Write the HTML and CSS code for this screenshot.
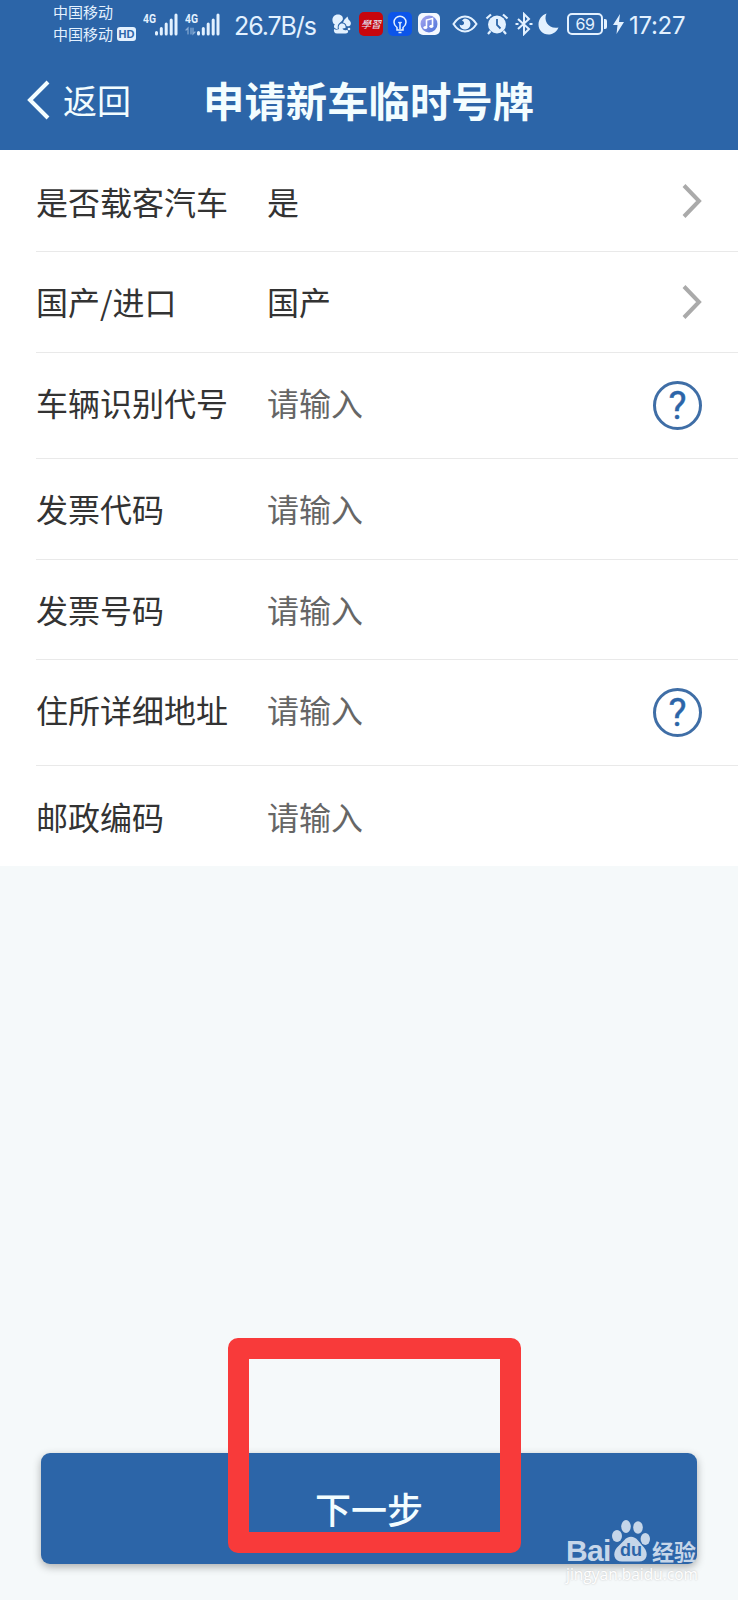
FILE: index.html
```html
<!DOCTYPE html>
<html lang="zh-CN">
<head>
    <meta charset="UTF-8">
    <meta name="viewport" content="width=device-width, initial-scale=1.0">
    <title>申请新车临时号牌</title>
    <link rel="stylesheet" href="styles.css">
</head>
<body>
    <header>
        <div class="status">
            <div class="carriers">
                <div>中国移动</div>
                <div>中国移动<span class="hd">HD</span></div>
            </div>
            <svg class="signal" width="36" height="24" viewBox="0 0 36 24">
                <text x="0" y="11" textLength="13" lengthAdjust="spacingAndGlyphs">4G</text>
                <path d="M13.500 20.500v1.500M18.300 16.500v5.500M23.200 12v10M28.200 8v14M33 3v19"/>
            </svg>
            <svg class="signal" width="36" height="24" viewBox="0 0 36 24">
                <text x="0" y="11" textLength="13" lengthAdjust="spacingAndGlyphs">4G</text>
                <path d="M13.500 20.500v1.500M18.300 16.500v5.500M23.200 12v10M28.200 8v14M33 3v19"/>
                <path class="faint" d="M1 18l2-2v6M6 16v6M8 16v6l2-2"/>
            </svg>
            <span class="speed">26.7B/s</span>
            <svg class="squirrel" width="20" height="22" viewBox="0 0 20 22">
                <path d="M.5 8C0 4 2.500 1.500 6 1.500c3.500 0 5.500 2.500 4.800 5C10 9 7 9.500 6 12c-.5 1.500 0 3-.5 4.500L2.500 15C1.500 13.500 2 12 3 11.500 1.500 11 .7 9.500.5 8z"/>
                <path d="M12.500 6.500l3-3 1 3c2 1.500 3 3.500 2 5.500-.8 1.300-2.500 1.500-4 1-.3-2-1.500-3-3.500-3.500z"/>
                <path d="M2 16c1.500 1 3.500 1 5 0-1-3 .5-5.500 3-5.500s4 2 3.500 4.500l-3 .5c.5 1.500 2 2 4 1.500l1.500.5c.5 2-.5 3-2.500 3H5c-2.500 0-3.500-2-3-4.500z"/>
                <circle cx="17" cy="16" r="1.300"/>
            </svg>
            <span class="app red">學習</span>
            <svg class="app blue" width="24" height="24" viewBox="0 0 24 24">
                <path d="M9 15.500C7 14 6 12.500 6 10.300a6 6 0 0 1 12 0c0 2.200-1 3.700-3 5.200V18H9zM10.500 20.500h3M12 17v-6M10.500 10l1.500 1.500 1.500-1.500"/>
            </svg>
            <svg class="music" width="22" height="22" viewBox="0 0 22 22">
                <defs>
                    <linearGradient id="note" x1="0" y1="0" x2="1" y2="1">
                        <stop offset="0" stop-color="#a9a6f0"/>
                        <stop offset="1" stop-color="#4a72d8"/>
                    </linearGradient>
                </defs>
                <rect width="22" height="22" rx="5" fill="#f4f8ff"/>
                <circle cx="11" cy="11" r="8.500" fill="url(#note)"/>
                <path d="M8.500 14.500V7l6-1.500v7.500" fill="none" stroke="#fff" stroke-width="1.600"/>
                <ellipse cx="7.300" cy="14.500" rx="2" ry="1.600" fill="#fff"/>
                <ellipse cx="13.300" cy="13.300" rx="2" ry="1.600" fill="#fff"/>
            </svg>
            <svg class="eye" width="26" height="18" viewBox="0 0 26 18">
                <path d="M1.500 9C5 3.500 9 1.500 13 1.500S21 3.500 24.500 9C21 14.500 17 16.500 13 16.500S5 14.500 1.500 9z" fill="none" stroke="#e3f1ff" stroke-width="2"/>
                <path d="M13 3.500a5.500 5.500 0 1 1-5.500 6c2 1.500 5 .5 4.500-2-.2-1-1-1.500-2-1.500.8-1.500 1.800-2.500 3-2.500z"/>
            </svg>
            <svg class="alarm" width="24" height="22" viewBox="0 0 24 22">
                <circle cx="12" cy="11.500" r="9"/>
                <path d="M1.500 5.500l4.500-4M18 1.500l4.500 4M5.500 18l-2.500 3M18.500 18l2.500 3" stroke="#e3f1ff" stroke-width="2.200"/>
                <path d="M12 6v6l3.500 3.500" fill="none" stroke="#2c65a8" stroke-width="1.800"/>
            </svg>
            <svg class="bt" width="18" height="24" viewBox="0 0 18 24">
                <path d="M3 7l11 10-5 5V2l5 5L3 17M.5 12h3M14.500 12h3"/>
            </svg>
            <svg class="moon" width="21" height="22" viewBox="0 0 21 22">
                <path d="M8.500.5C5 8 11 16.500 20.500 14.500 18 20 13.500 21.500 10.500 21.500 4.500 21.500.5 17 .5 11.500.5 6 4 2 8.500.5z"/>
            </svg>
            <span class="battery">69</span>
            <svg class="bolt" width="11" height="20" viewBox="0 0 11 20">
                <path d="M7 0L0 11h4.500L3.500 20 11 8H6z"/>
            </svg>
            <span class="clock">17:27</span>
        </div>
        <nav>
            <svg width="24" height="40" viewBox="0 0 24 40">
                <path d="M21 2L3 20l18 18"/>
            </svg>
            <span class="back">返回</span>
            <h1>申请新车临时号牌</h1>
        </nav>
    </header>

    <main>
        <div class="row">
            <label>是否载客汽车</label>
            <span class="value">是</span>
            <svg class="arrow" width="20" height="36" viewBox="0 0 20 36"><path d="M2 2.500L17 18 2 33.500"/></svg>
        </div>
        <div class="row">
            <label>国产/进口</label>
            <span class="value">国产</span>
            <svg class="arrow" width="20" height="36" viewBox="0 0 20 36"><path d="M2 2.500L17 18 2 33.500"/></svg>
        </div>
        <div class="row tall">
            <label>车辆识别代号</label>
            <span class="value empty">请输入</span>
            <span class="help">?</span>
        </div>
        <div class="row">
            <label>发票代码</label>
            <span class="value empty">请输入</span>
        </div>
        <div class="row">
            <label>发票号码</label>
            <span class="value empty">请输入</span>
        </div>
        <div class="row tall">
            <label>住所详细地址</label>
            <span class="value empty">请输入</span>
            <span class="help">?</span>
        </div>
        <div class="row">
            <label>邮政编码</label>
            <span class="value empty">请输入</span>
        </div>
    </main>

    <footer>
        <button type="button">下一步</button>
        <div class="mark"></div>
        <div class="watermark">
            <div class="logo">
                <span class="bai">Bai</span>
                <span class="paw">
                    <svg width="38" height="42" viewBox="0 0 38 42">
                        <ellipse cx="5" cy="16" rx="5" ry="6"/>
                        <ellipse cx="14" cy="6.500" rx="4.800" ry="6.500"/>
                        <ellipse cx="26" cy="7.500" rx="4.800" ry="6.200"/>
                        <ellipse cx="33.300" cy="19" rx="4.700" ry="6"/>
                        <path d="M12 20.500c4-5 10-5 14 0l6 7c5 6 3 14-5 14H10c-8 0-10-8-5-14z"/>
                    </svg>
                    <b>du</b>
                </span>
                <span class="jy">经验</span>
            </div>
            <div class="url">jingyan.baidu.com</div>
        </div>
    </footer>
</body>
</html>
```

FILE: styles.css
```css
* {
    box-sizing: border-box;
}
body {
    margin: 0;
    height: 1600px;
    display: flex;
    flex-direction: column;
    font-family: "Noto Sans CJK SC", sans-serif;
    background-color: #f5f9fa;
    color: #333;
    overflow: hidden;
}
header {
    height: 150px;
    background-color: #2c65a8;
    color: #f3fdff;
}

/* status bar */
.status {
    height: 48px;
    padding-left: 53px;
    display: flex;
    align-items: center;
    color: #e3f1ff;
    white-space: nowrap;
}
.status svg {
    flex: none;
    fill: #e3f1ff;
}
.carriers {
    width: 84px;
    margin-top: -3px;
    font-size: 15px;
    line-height: 21.5px;
}
.carriers div {
    display: flex;
    align-items: center;
}
.hd {
    width: 19px;
    height: 14px;
    margin: 2px 0 0 4px;
    border-radius: 3px;
    background-color: #e3f1ff;
    color: #2c65a8;
    font: bold 11px/14px "Liberation Sans", sans-serif;
    text-align: center;
}
.signal {
    margin-left: 6px;
}
.signal text {
    font: bold 12px Roboto, sans-serif;
}
.signal path {
    fill: none;
    stroke: #e3f1ff;
    stroke-width: 3;
    stroke-linecap: round;
}
.signal .faint {
    stroke-width: 1.2;
    opacity: 0.5;
}
.speed {
    width: 82px;
    margin-left: 13px;
    padding-top: 3px;
    font: 25px Inter, sans-serif;
    letter-spacing: -1.1px;
}
.squirrel {
    margin-left: 16px;
}
.app {
    width: 24px;
    height: 24px;
    border-radius: 5px;
}
.red {
    margin-left: 7px;
    background-color: #c8060c;
    font: italic 10px/24px "Noto Sans CJK SC", sans-serif;
    text-align: center;
}
.status .blue {
    margin-left: 5px;
    background-color: #0c55ea;
    fill: none;
    stroke: #e3f1ff;
    stroke-width: 1.5;
}
.music {
    margin-left: 6px;
}
.eye {
    margin-left: 12px;
}
.alarm {
    margin-left: 7px;
}
.status .bt {
    margin-left: 6px;
    fill: none;
    stroke: #e3f1ff;
    stroke-width: 2;
}
.moon {
    margin-left: 5px;
}
.battery {
    position: relative;
    width: 36px;
    height: 22px;
    margin-left: 8px;
    border: 2px solid #e3f1ff;
    border-radius: 5px;
    font: 16px/18px Inter, sans-serif;
    letter-spacing: -0.5px;
    text-align: center;
}
.battery::after {
    content: "";
    position: absolute;
    right: -6px;
    top: 4px;
    width: 3px;
    height: 10px;
    border-radius: 0 2px 2px 0;
    background-color: #e3f1ff;
}
.bolt {
    margin-left: 10px;
}
.clock {
    margin-left: 5px;
    padding-top: 3px;
    font: 24px Inter, sans-serif;
    letter-spacing: -0.3px;
}

/* title bar */
nav {
    height: 102px;
    padding-left: 27px;
    display: flex;
    align-items: center;
}
nav svg {
    margin-top: 2px;
    fill: none;
    stroke: #f3fdff;
    stroke-width: 4;
}
.back {
    width: 140px;
    margin-left: 12px;
    padding-top: 1px;
    font-size: 34px;
    line-height: 50px;
}
h1 {
    margin: 0;
    font-size: 41.4px;
    line-height: 60px;
}

/* form */
main {
    padding: 1px 0 0 36px;
    background-color: #fff;
}
.row {
    height: 101px;
    display: flex;
    padding-right: 36px;
    font-size: 32px;
    line-height: 99px;
    border-bottom: 1px solid #e9e9e9;
}
.row.tall {
    height: 106px;
    line-height: 98px;
}
.row:first-child {
    line-height: 101px;
}
.row:nth-child(5) {
    height: 100px;
}
.row:last-child {
    height: 100px;
    line-height: 100px;
    border-bottom: none;
}
.row label {
    width: 231px;
}
.value {
    flex: 1;
}
.empty {
    color: #666;
}
.arrow {
    margin-top: 32px;
    fill: none;
    stroke: #aaa;
    stroke-width: 4;
}
.help {
    width: 49px;
    height: 49px;
    margin-top: 28px;
    border: 3px solid #3f6ea6;
    border-radius: 50%;
    color: #2c65a8;
    font: 38px/45px Roboto, sans-serif;
    -webkit-text-stroke: 0.4px #2c65a8;
    text-align: center;
}

/* bottom button */
footer {
    position: relative;
    margin-top: auto;
    padding: 0 41px 36px;
}
button {
    display: block;
    width: 100%;
    height: 111px;
    padding: 0 0 2px;
    border: none;
    border-radius: 9px;
    background-color: #2c65a8;
    color: #f3fdff;
    font: 500 36px "Noto Sans CJK SC", sans-serif;
    box-shadow: 0 3px 8px rgba(0, 0, 0, 0.3);
}
.mark {
    position: absolute;
    left: 228px;
    bottom: 47px;
    width: 293px;
    height: 215px;
    border: 21px solid #f83a3a;
    border-radius: 10px;
}
.watermark {
    position: absolute;
    left: 566px;
    bottom: 14px;
    width: 132px;
    color: #c6d6e9;
}
.logo {
    display: flex;
    align-items: flex-end;
    height: 42px;
}
.bai {
    width: 46px;
    font: bold 30px/22px "Liberation Sans", sans-serif;
    letter-spacing: -0.7px;
}
.paw {
    position: relative;
    width: 38px;
    height: 42px;
    fill: #c6d6e9;
}
.paw b {
    position: absolute;
    left: 8px;
    top: 20px;
    color: #2c65a8;
    font: bold 18px/20px "Liberation Sans", sans-serif;
}
.jy {
    margin-left: 2px;
    font-size: 22px;
    font-weight: bold;
    line-height: 24px;
}
.url {
    height: 24px;
    color: #fff;
    font: 15.5px/24px "Open Sans", sans-serif;
    text-shadow: 0 0 2px #bbb;
    white-space: nowrap;
}
```
